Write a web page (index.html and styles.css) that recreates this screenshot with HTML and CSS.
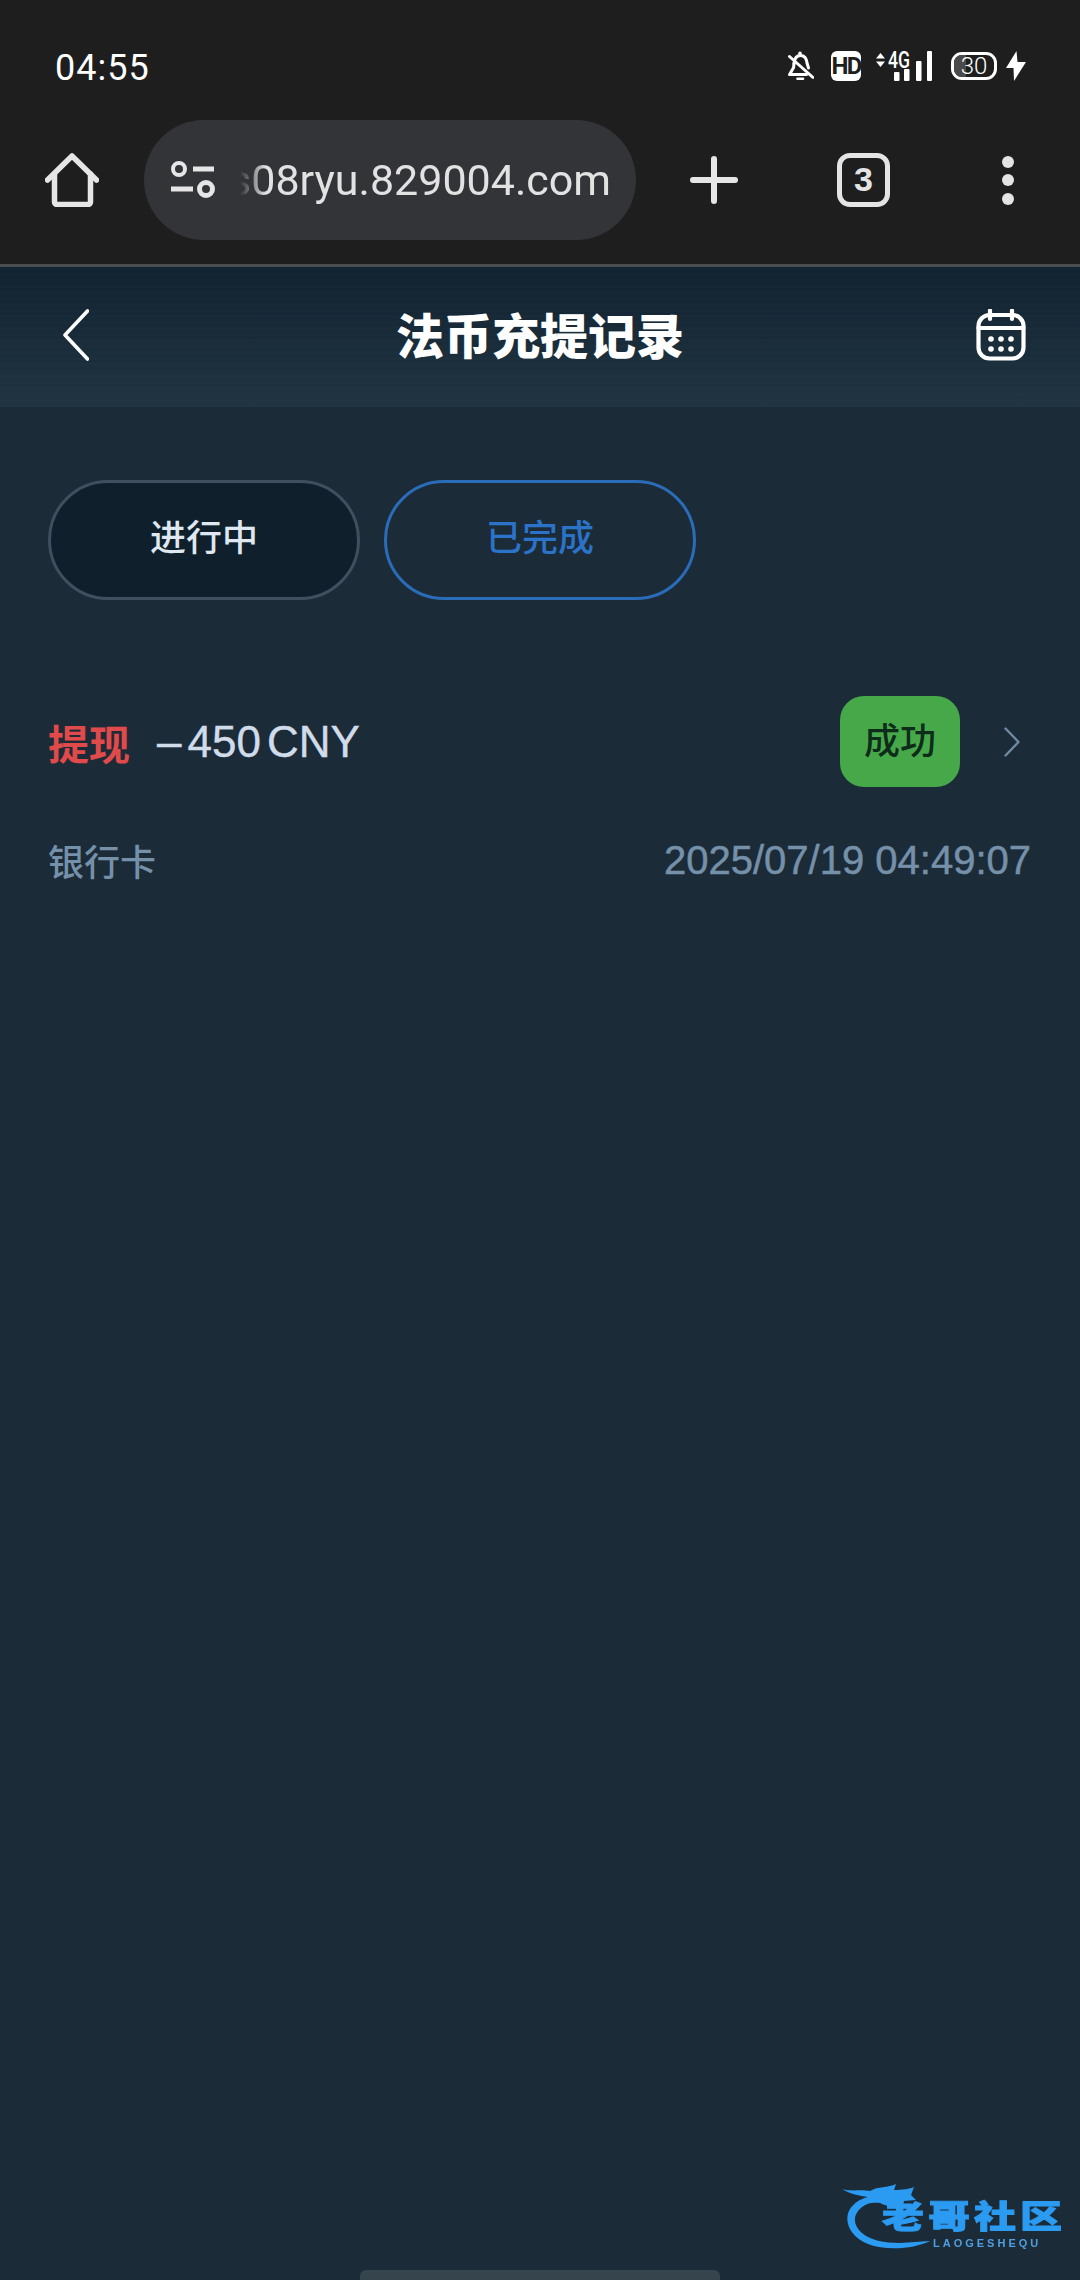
FILE: index.html

```html
<!DOCTYPE html>
<html lang="zh">
<head>
  <meta charset="UTF-8">
  <meta name="viewport" content="width=device-width, initial-scale=1.0"/>
  <title>法币充提记录</title>
  <link rel="stylesheet" href="styles.css">
</head>
<body>
  <div class="browser">
    <div class="statusbar">
      <span class="time">04:55</span>
      <div class="status-icons">
        <!-- muted bell -->
        <svg class="ic-bell" width="26" height="30" viewBox="0 0 26 30" fill="none" stroke="#fff" stroke-width="3" stroke-linejoin="round" stroke-linecap="round">
          <circle cx="12" cy="2.4" r="1.8" fill="#fff" stroke="none"/>
          <path d="M6 12.5 C6.5 7 9 4.4 12.5 4.4 C16 4.4 18.5 7 19 12 L20.5 17"/>
          <path d="M6 12.5 L5.6 16.5 L1.6 23.6 H18.5"/>
          <path d="M1.5 5.5 L25 26.5"/>
          <path d="M9.5 27.8 H15" stroke-width="2.6"/>
        </svg>
        <span class="hd">HD</span>
        <svg class="ic-signal" width="56" height="30" viewBox="0 0 56 30">
          <path d="M4.5 2 L9 7.5 H0 Z M4.5 16 L0 10.5 H9 Z" fill="#fff"/>
          <text x="12" y="17" class="net" textLength="22" lengthAdjust="spacingAndGlyphs">4G</text>
          <rect x="18" y="21" width="5.5" height="9" rx="1" fill="#fff"/>
          <rect x="28" y="18" width="5.5" height="12" rx="1" fill="#fff"/>
          <rect x="40" y="10" width="5.5" height="20" rx="1" fill="#fff"/>
          <rect x="51" y="0" width="5" height="30" rx="1" fill="#fff"/>
        </svg>
        <div class="battery"><span class="level"></span><span class="pct">30</span></div>
        <svg class="ic-bolt" width="20" height="30" viewBox="0 0 20 30"><path d="M10.5 0 L0 17 H7.5 L8 30 L20 11 H11.5 Z" fill="#fff"/></svg>
      </div>
    </div>

    <div class="toolbar">
      <svg class="ic-home" width="54" height="54" viewBox="0 0 54 54" fill="none" stroke="#e6e6e6" stroke-width="5.5" stroke-linecap="round" stroke-linejoin="round">
        <path d="M2.5 27 L27 3 L51.5 27"/>
        <path d="M9.5 21 V49 a2.5 2.5 0 0 0 2.5 2.5 H43 a2.5 2.5 0 0 0 2.5 -2.5 V21"/>
      </svg>
      <div class="addr">
        <svg class="ic-tune" width="45" height="38" viewBox="0 0 45 38" fill="none" stroke="#e6e6e6">
          <circle cx="9" cy="8" r="6" stroke-width="4"/>
          <path d="M23 8 H44 M1 28 H23" stroke-width="5"/>
          <circle cx="36" cy="28" r="6.5" stroke-width="5"/>
        </svg>
        <div class="url"><span>s08ryu.829004.com</span></div>
      </div>
      <svg class="ic-plus" width="48" height="48" viewBox="0 0 48 48" stroke="#e6e6e6" stroke-width="6" stroke-linecap="round">
        <path d="M24 3 V45 M3 24 H45"/>
      </svg>
      <div class="tabs-count">3</div>
      <div class="dots"><i></i><i></i><i></i></div>
    </div>
  </div>

  <div class="header">
    <svg class="ic-back" width="26" height="52" viewBox="0 0 26 52" fill="none" stroke="#fff" stroke-width="3.6" stroke-linecap="round" stroke-linejoin="round">
      <path d="M24.5 2 L2 26 L24.5 50"/>
    </svg>
    <h1>法币充提记录</h1>
    <svg class="ic-cal" width="50" height="52" viewBox="0 0 50 52" fill="none" stroke="#fff" stroke-width="4.2" stroke-linecap="round">
      <rect x="2.5" y="6" width="45" height="43.5" rx="11"/>
      <path d="M2.5 19 H47.5 M14 1.5 V10 M36 1.5 V10"/>
      <g fill="#fff" stroke="none">
        <circle cx="15" cy="30" r="2.8"/><circle cx="25" cy="30" r="2.8"/><circle cx="35" cy="30" r="2.8"/>
        <circle cx="15" cy="40" r="2.8"/><circle cx="25" cy="40" r="2.8"/><circle cx="35" cy="40" r="2.8"/>
      </g>
    </svg>
  </div>

  <div class="content">
    <div class="tabs">
      <div class="tab">进行中</div>
      <div class="tab active">已完成</div>
    </div>

    <div class="record">
      <div class="rec-top">
        <span class="rec-type">提现</span>
        <span class="rec-amount"><span class="minus">–</span><span>450</span><span class="unit">CNY</span></span>
        <span class="badge">成功</span>
        <svg class="ic-next" width="16" height="30" viewBox="0 0 16 30" fill="none" stroke="#6f8aa3" stroke-width="2.4" stroke-linecap="round" stroke-linejoin="round">
          <path d="M1.5 1.5 L14.5 15 L1.5 28.5"/>
        </svg>
      </div>
      <div class="rec-bottom">
        <span class="rec-channel">银行卡</span>
        <span class="rec-time">2025/07/19 04:49:07</span>
      </div>
    </div>
  </div>

  <!-- community logo sits over the page corner -->
  <div class="wm">
    <svg class="wm-dragon" width="92" height="66" viewBox="0 0 92 66">
      <path d="M0 6 C10 9 20 6 28 8 C36 3 46 5 54 1 L52 7 C60 7 68 6 72 4 L69 12 L74 17 L62 18 L60 24 C52 25 44 23 38 20 C30 19 25 20 20 24 C10 32 11 42 20 50 C28 57 42 60 58 60 L88 58 C72 66 44 68 26 61 C8 54 1 38 8 26 C12 20 18 16 26 14 C18 13 8 11 0 6 Z" fill="#2b9bf2"/>
    </svg>
    <div class="wm-name">老哥社区</div>
    <div class="wm-sub">LAOGESHEQU</div>
  </div>

  <div class="homebar"></div>
</body>
</html>
```

FILE: styles.css

```css
* { box-sizing: border-box; }
html, body { margin: 0; padding: 0; }
body { position: relative; width: 1080px; height: 2280px; overflow: hidden; background: #1c2b38; font-family: "Liberation Sans", "Noto Sans CJK SC", sans-serif; display: flex; flex-direction: column; }

.browser { background: #1e1e1e; border-bottom: 3px solid #4b4d4f; height: 267px; flex: none; }

.statusbar { height: 108px; display: flex; justify-content: space-between; padding: 51px 54px 0 55px; }
.time { font-family: Roboto, sans-serif; font-size: 36px; line-height: 34px; color: #fff; letter-spacing: 1px; }
.status-icons { display: flex; height: 30px; align-items: center; }
.hd { width: 30px; height: 30px; margin-left: 17px; background: #fff; border-radius: 6px; color: #1e1e1e; font: bold 24px/30px Roboto, sans-serif; letter-spacing: -1.8px; text-align: center; }
.ic-signal { margin-left: 15px; }
.net { font: 500 24px Roboto, sans-serif; fill: #fff; }
.battery { position: relative; width: 46px; height: 28px; margin-left: 19px; border: 3px solid #fff; border-radius: 11px; overflow: hidden; text-align: center; }
.battery .level { position: absolute; left: 0; top: 0; bottom: 0; width: 30%; background: #4a4a4a; }
.battery .pct { position: relative; display: block; font: 300 24px/22px Roboto, sans-serif; color: #fff; }
.ic-bolt { margin-left: 9px; }

.toolbar { height: 144px; display: flex; align-items: center; padding-left: 45px; }
.addr { width: 492px; height: 120px; margin-left: 45px; padding: 0 25px 0 26px; background: #333438; border-radius: 60px; display: flex; align-items: center; }
.ic-tune { flex: none; }
.url { flex: 1; min-width: 0; margin-left: 25px; overflow: hidden; display: flex; justify-content: flex-end; white-space: nowrap; font-family: Roboto, sans-serif; font-size: 43px; color: #e2e2e2; -webkit-mask-image: linear-gradient(to right, transparent 0, #000 26px); mask-image: linear-gradient(to right, transparent 0, #000 26px); }
.ic-plus { margin-left: 54px; }
.tabs-count { width: 53px; height: 54px; margin-left: 99px; border: 5.5px solid #e4e4e4; border-radius: 13px; color: #e4e4e4; font: bold 34px/43px "Liberation Sans", sans-serif; text-align: center; }
.dots { margin-left: 112px; display: flex; flex-direction: column; gap: 6.5px; }
.dots i { display: block; width: 12px; height: 12px; border-radius: 50%; background: #e4e4e4; }

.header { height: 140px; flex: none; display: flex; align-items: center; justify-content: space-between; padding: 0 54px 4px 63px; position: relative; background: repeating-linear-gradient(to bottom, rgba(255,255,255,0.008) 0 3px, transparent 3px 6px), linear-gradient(to bottom, #112231 0, #203441 100%); }
.header h1 { position: absolute; left: 0; right: 0; top: 44px; margin: 0; text-align: center; font-size: 48px; line-height: 54px; font-weight: 900; color: #fff; }

.content { flex: 1; padding: 73px 49px 0 48px; }
.tabs { display: flex; gap: 24px; }
.tab { width: 312px; height: 120px; border: 3px solid #3e5060; border-radius: 60px; background: #0f1f2c; color: #dfe7f0; font-size: 36px; font-weight: 500; line-height: 112px; text-align: center; }
.tab.active { background: transparent; border-color: #2a6cb8; color: #2a73c8; }

.record { margin-top: 96px; }
.rec-top { display: flex; align-items: center; height: 91px; }
.rec-type { width: 108px; color: #e04a4a; font-size: 41px; font-weight: 700; }
.rec-amount { display: flex; color: #d0dcea; font-size: 44px; -webkit-text-stroke: 0.4px #d0dcea; }
.minus { margin: 0 6px 0 1px; }
.unit { margin-left: 6px; }
.badge { width: 120px; height: 91px; margin-left: auto; background: #47a84a; border-radius: 24px; color: #0e2c1a; font-size: 36px; font-weight: 500; line-height: 91px; text-align: center; }
.ic-next { margin: 0 11px 0 44px; flex: none; }

.rec-bottom { display: flex; justify-content: space-between; align-items: center; margin-top: 47px; color: #7590a9; }
.rec-channel { font-size: 36px; font-weight: 500; }
.rec-time { font-size: 40px; -webkit-text-stroke: 0.5px #7590a9; }

.wm { position: absolute; left: 842px; top: 2183px; width: 222px; height: 66px; filter: blur(0.6px); }
.wm-dragon { position: absolute; left: 0; top: 0; }
.wm-name { position: absolute; left: 40px; top: 18px; font-size: 42px; line-height: 42px; font-weight: 900; letter-spacing: 4px; white-space: nowrap; color: #2b9bf2; -webkit-text-stroke: 1.2px #2b9bf2; transform: scaleY(0.76); transform-origin: top left; }
.wm-sub { position: absolute; left: 91px; top: 55px; font-size: 11px; line-height: 11px; font-weight: bold; letter-spacing: 3px; color: #4f9fe0; }

.homebar { position: absolute; left: 360px; bottom: 0; width: 360px; height: 10px; background: #36444e; border-radius: 6px 6px 0 0; }
```
